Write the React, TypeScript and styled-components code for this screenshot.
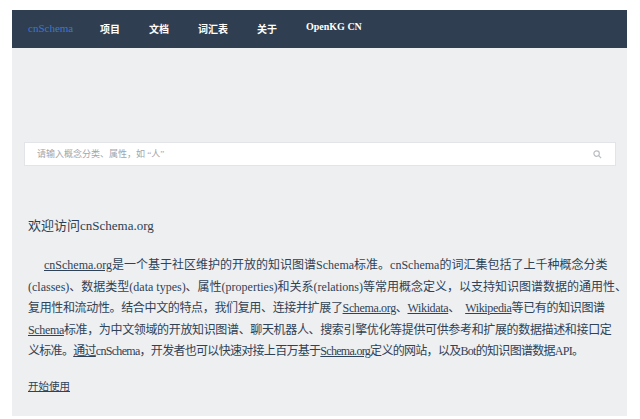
import styled, { createGlobalStyle } from "styled-components";

const GlobalStyle = createGlobalStyle`
  html, body {
    margin: 0;
    padding: 0;
    background: #ffffff;
  }
  body {
    font-family: "Liberation Serif", "Noto Sans CJK SC", serif;
  }
`;

const navItems = ["项目", "文档", "词汇表", "关于", "OpenKG CN"];

export default function App() {
  return (
    <>
      <GlobalStyle />
      <Page>
        <Shell>
          <NavBar>
            <Brand href="#">cnSchema</Brand>
            <NavList>
              {navItems.map((item) => (
                <NavItem key={item}>{item}</NavItem>
              ))}
            </NavList>
          </NavBar>
          <Jumbo>
            <SearchBox>
              <SearchInput placeholder="请输入概念分类、属性，如 “人”" />
              <SearchIcon width="9" height="9" viewBox="0 0 10 10">
                <circle cx="4" cy="4" r="3" fill="none" stroke="#b9bcc2" strokeWidth="1.3" />
                <path d="M6.3 6.3L9 9" stroke="#b9bcc2" strokeWidth="1.4" />
              </SearchIcon>
            </SearchBox>
            <Intro>
              <Title>欢迎访问cnSchema.org</Title>
              <Para>
                <Line $indent>
                  <A href="#">cnSchema.org</A>是一个基于社区维护的开放的知识图谱Schema标准。cnSchema的词汇集包括了上千种概念分类
                </Line>
                <Line>
                  (classes)、数据类型(data types)、属性(properties)和关系(relations)等常用概念定义，以支持知识图谱数据的通用性、
                </Line>
                <Line $spacing={-0.35}>
                  复用性和流动性。结合中文的特点，我们复用、连接并扩展了<A href="#">Schema.org</A>、<A href="#">Wikidata</A>、
                  {"  "}
                  <A href="#">Wikipedia</A>等已有的知识图谱
                </Line>
                <Line $spacing={-0.35}>
                  <A href="#">Schema</A>标准，为中文领域的开放知识图谱、聊天机器人、搜索引擎优化等提供可供参考和扩展的数据描述和接口定
                </Line>
                <Line $spacing={-0.7}>
                  义标准。<A href="#">通过</A>cnSchema，开发者也可以快速对接上百万基于<A href="#">Schema.org</A>定义的网站，以及Bot的知识图谱数据API。
                </Line>
              </Para>
              <Start href="#">开始使用</Start>
            </Intro>
          </Jumbo>
        </Shell>
      </Page>
    </>
  );
}

const Page = styled.div`
  padding: 10px 13px 6px 12px;
`;

const Shell = styled.div`
  display: flex;
  flex-direction: column;
`;

const NavBar = styled.nav`
  height: 38px;
  background: #2f3e51;
  display: flex;
  align-items: center;
  padding: 0 16px 2px;
  box-sizing: border-box;
`;

const Brand = styled.a`
  color: #3a78c9;
  font-size: 11px;
  text-decoration: none;
  width: 56px;
  margin-right: 16px;
`;

const NavList = styled.ul`
  display: flex;
  gap: 29px;
  list-style: none;
  margin: 0;
  padding: 0;
`;

const NavItem = styled.li`
  color: #ffffff;
  font-size: 10px;
  font-weight: 700;
`;

const Jumbo = styled.section`
  background: #eeeff1;
  padding: 94px 11px 22px 12px;
  display: flex;
  flex-direction: column;
`;

const SearchBox = styled.div`
  height: 24px;
  background: #ffffff;
  border: 1px solid #e3e4e7;
  box-sizing: border-box;
  display: flex;
  align-items: center;
  padding: 0 10px 0 12px;
`;

const SearchInput = styled.input`
  flex: 1;
  border: none;
  outline: none;
  background: transparent;
  font-family: "Liberation Serif", "Noto Sans CJK SC", serif;
  font-size: 9px;
  color: #555;
  padding: 0;

  &::placeholder {
    color: #a3a6ac;
  }
`;

const SearchIcon = styled.svg`
  flex: none;
  margin-right: 3px;
`;

const Intro = styled.div`
  padding: 50px 4px 0 4px;
`;

const Title = styled.h1`
  margin: 0 0 19px;
  font-size: 13px;
  font-weight: 400;
  color: #2c3e50;
  line-height: 20px;
`;

const Para = styled.div`
  font-size: 12px;
  color: #2f4256;
`;

const Line = styled.div<{ $indent?: boolean; $spacing?: number }>`
  display: block;
  white-space: pre;
  height: 21.5px;
  line-height: 21.5px;
  padding-left: ${(p) => (p.$indent ? "16px" : "0")};
  letter-spacing: ${(p) => p.$spacing ?? 0}px;
`;

const A = styled.a`
  color: #2f4256;
  text-decoration: underline;
`;

const Start = styled.a`
  display: inline-block;
  margin-top: 15px;
  font-size: 10.5px;
  color: #2f4256;
  text-decoration: underline;
`;
